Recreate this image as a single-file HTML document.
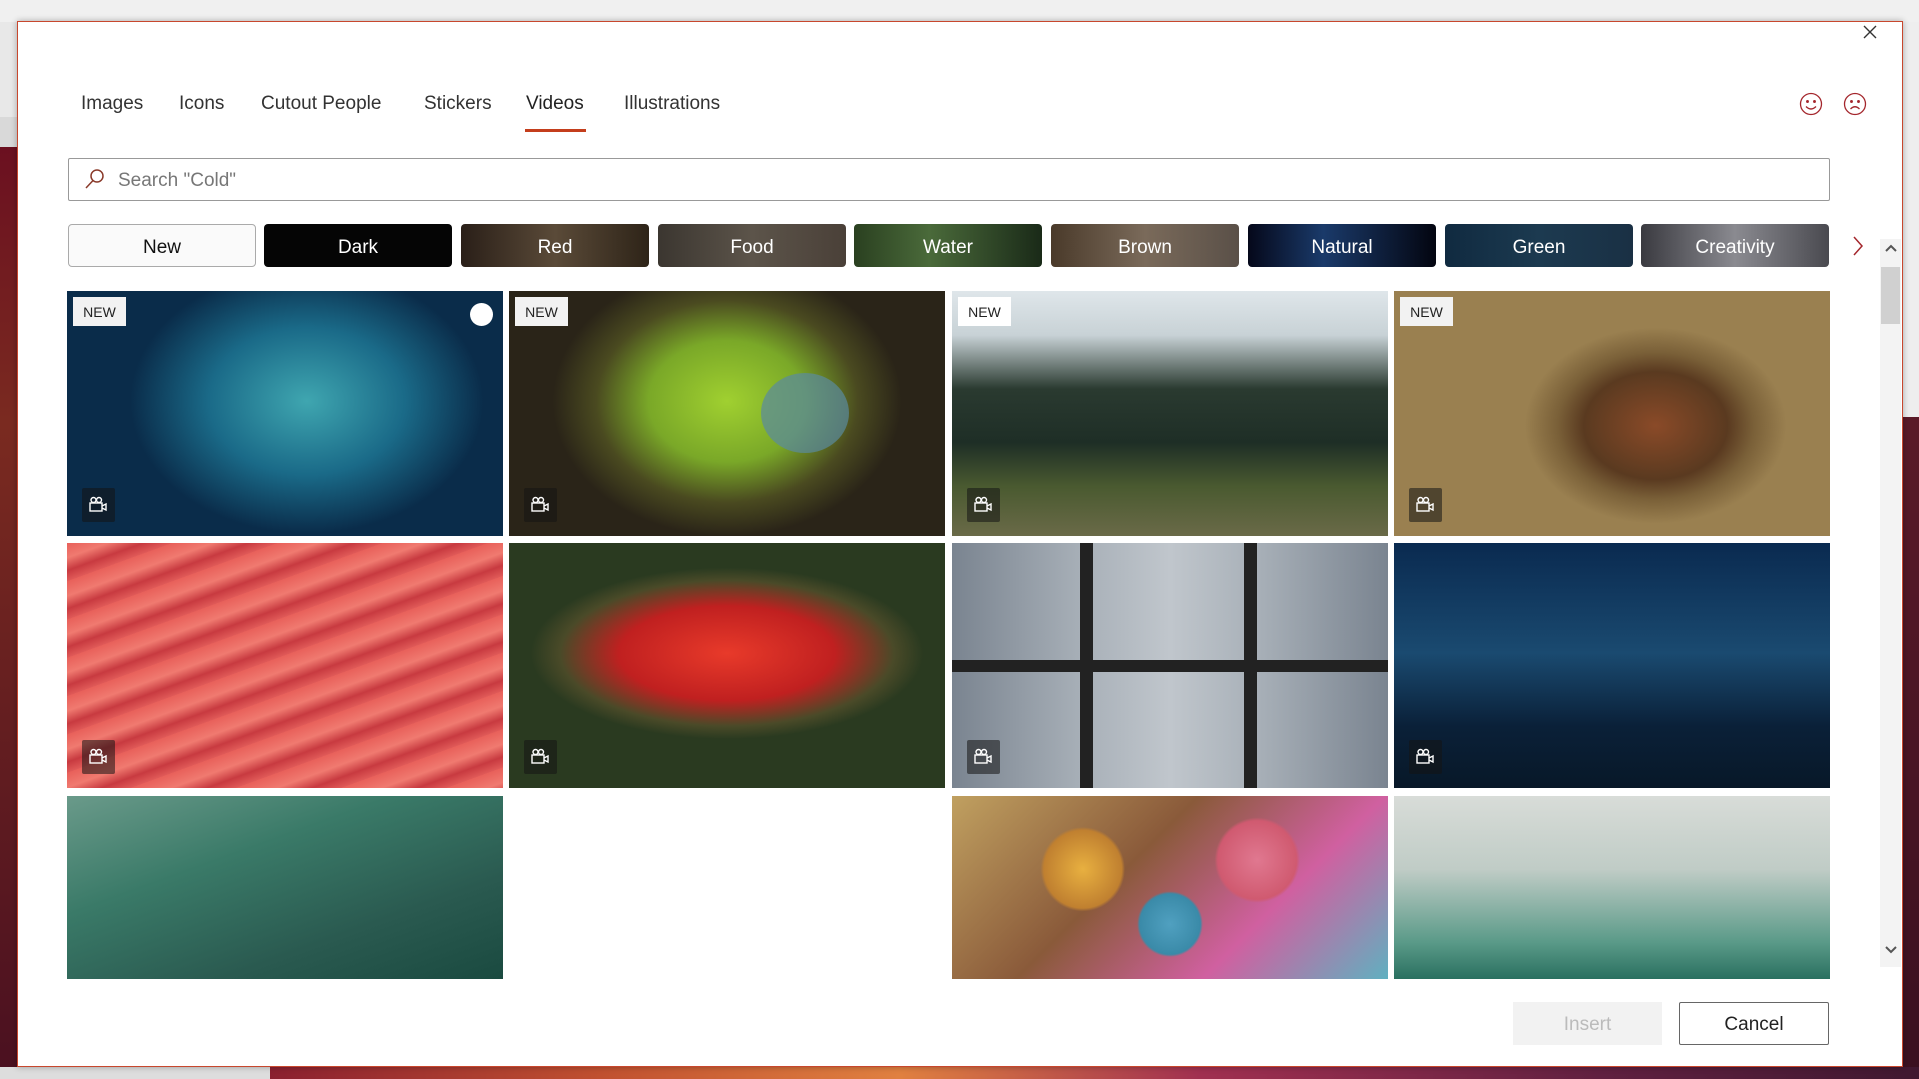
<!DOCTYPE html>
<html><head><meta charset="utf-8"><style>
*{margin:0;padding:0;box-sizing:border-box}
body{width:1919px;height:1079px;overflow:hidden;position:relative;font-family:"Liberation Sans",sans-serif;background:#5a1420}
.abs{position:absolute}
#topbar{left:0;top:0;width:1919px;height:22px;background:#f0f0f0}
#leftbg{left:0;top:22px;width:17px;height:1057px;background:linear-gradient(#e8e8e8 0,#e8e8e8 95px,#d9d9d9 95px,#d9d9d9 125px,#6b1020 125px,#7a2a20 400px,#4a1020)}
#bottombg{left:0;top:1067px;width:1919px;height:12px;background:linear-gradient(90deg,#ddd 0,#ddd 270px,#8a2030 270px,#c05030 600px,#e08040 900px,#a03050 1200px,#602040 1600px,#401830)}
#rightbg{left:1903px;top:22px;width:16px;height:1057px;background:linear-gradient(#eee 0,#eee 395px,#5a1a28 395px,#3a1020)}
#dlg{left:17px;top:21px;width:1886px;height:1046px;background:#fff;border:1px solid #c8472d;box-shadow:0 0 6px rgba(0,0,0,.3)}
.tab{position:absolute;top:93px;font-size:19px;color:#333}
.chip{position:absolute;top:224px;width:188px;height:43px;border-radius:4px;color:#fff;font-size:19px;display:flex;align-items:center;justify-content:center;padding-top:4px}
.tile{position:absolute;width:436px;overflow:hidden}
.new{position:absolute;left:6px;top:6px;width:53px;height:29px;background:#f2f2f2;color:#222;font-size:14px;display:flex;align-items:center;justify-content:center}
.vid{position:absolute;left:15px;bottom:14px;width:33px;height:34px;background:rgba(20,20,20,.55);border-radius:2px}
.vid svg{position:absolute;left:7px;top:8px}
</style></head><body>
<div class="abs" id="topbar"></div>
<div class="abs" id="leftbg"></div>
<div class="abs" id="rightbg"></div>
<div class="abs" id="bottombg"></div>
<div class="abs" id="dlg"></div>

<div class="tab" style="left:81px">Images</div>
<div class="tab" style="left:179px">Icons</div>
<div class="tab" style="left:261px">Cutout People</div>
<div class="tab" style="left:424px">Stickers</div>
<div class="tab" style="left:526px;color:#222">Videos</div>
<div class="tab" style="left:624px">Illustrations</div>
<div class="abs" style="left:525px;top:129px;width:61px;height:3px;background:#c43e1c"></div>

<svg class="abs" style="left:1799px;top:92px" width="24" height="24" viewBox="0 0 24 24" fill="none" stroke="#a4262c" stroke-width="1.3"><circle cx="12" cy="12" r="10.5"/><circle cx="8.5" cy="9.5" r=".8" fill="#a4262c"/><circle cx="15.5" cy="9.5" r=".8" fill="#a4262c"/><path d="M7 14.5q5 5 10 0"/></svg>
<svg class="abs" style="left:1843px;top:92px" width="24" height="24" viewBox="0 0 24 24" fill="none" stroke="#a4262c" stroke-width="1.3"><circle cx="12" cy="12" r="10.5"/><circle cx="8.5" cy="9.5" r=".8" fill="#a4262c"/><circle cx="15.5" cy="9.5" r=".8" fill="#a4262c"/><path d="M7.5 17q4.5-4.5 9 0"/></svg>
<svg class="abs" style="left:1862px;top:24px" width="16" height="16" viewBox="0 0 16 16" stroke="#333" stroke-width="1.4"><path d="M2 2L14 14M14 2L2 14"/></svg>

<div class="abs" style="left:68px;top:158px;width:1762px;height:43px;border:1px solid #999;border-radius:2px"></div>
<svg class="abs" style="left:84px;top:168px" width="22" height="22" viewBox="0 0 22 22" fill="none" stroke="#8a3a2a" stroke-width="1.5"><circle cx="13" cy="8" r="6"/><path d="M9 12.5L2 20"/></svg>
<div class="abs" style="left:118px;top:170px;font-size:19px;color:#777">Search "Cold"</div>

<div class="chip" style="left:68px;background:#fafafa;border:1px solid #aaa;color:#111">New</div>
<div class="chip" style="left:264px;background:#050505">Dark</div>
<div class="chip" style="left:461px;background:linear-gradient(90deg,#2a1f18,#5a4a38 50%,#2e2418)">Red</div>
<div class="chip" style="left:658px;background:linear-gradient(90deg,#3b3630,#5c544a,#4a4038)">Food</div>
<div class="chip" style="left:854px;background:linear-gradient(90deg,#2a4020,#4a6a3a 40%,#1a2a18)">Water</div>
<div class="chip" style="left:1051px;background:linear-gradient(90deg,#4a3a2a,#7a6a5a 50%,#5a5048)">Brown</div>
<div class="chip" style="left:1248px;background:linear-gradient(90deg,#05081a,#1a3a6a 40%,#030510)">Natural</div>
<div class="chip" style="left:1445px;background:linear-gradient(90deg,#102a40,#1c3a50 50%,#1a3044)">Green</div>
<div class="chip" style="left:1641px;background:linear-gradient(90deg,#3a3a40,#8a8a90 50%,#4a4a50)">Creativity</div>
<svg class="abs" style="left:1851px;top:235px" width="14" height="22" viewBox="0 0 14 22" fill="none" stroke="#a4262c" stroke-width="1.5"><path d="M3 2L11 11L3 20"/></svg>

<div class="abs" style="left:1880px;top:239px;width:21px;height:728px;background:#f3f3f3"></div>
<div class="abs" style="left:1881px;top:267px;width:19px;height:57px;background:#d0d0d0"></div>
<svg class="abs" style="left:1884px;top:242px" width="14" height="12" viewBox="0 0 14 12" fill="none" stroke="#555" stroke-width="2"><path d="M2 9L7 4L12 9"/></svg>
<svg class="abs" style="left:1884px;top:944px" width="14" height="12" viewBox="0 0 14 12" fill="none" stroke="#555" stroke-width="2"><path d="M2 3L7 8L12 3"/></svg>

<!-- row1 -->
<div class="tile" style="left:67px;top:291px;height:245px;background:radial-gradient(ellipse 45% 60% at 55% 45%,#3fa6b0,#1a6a88 50%,#0a2c4a 90%)"><div class="new">NEW</div><div class="abs" style="left:403px;top:12px;width:23px;height:23px;border-radius:50%;background:#fff"></div><div class="vid"><svg width="19" height="17" viewBox="0 0 19 17" fill="none" stroke="#fff" stroke-width="1.4"><circle cx="4.5" cy="4" r="2.5"/><circle cx="10" cy="4" r="2.5"/><rect x="1" y="7" width="12" height="8"/><path d="M13 10L17 8V14L13 12"/></svg></div></div>
<div class="tile" style="left:509px;top:291px;height:245px;background:radial-gradient(ellipse 40% 55% at 50% 45%,#a0d030,#7aa828 45%,#4a4a20 75%,#2a2418)"><div class="new">NEW</div><div class="abs" style="left:252px;top:82px;width:88px;height:80px;border-radius:50%;background:#5a8aa0;opacity:.7"></div><div class="vid"><svg width="19" height="17" viewBox="0 0 19 17" fill="none" stroke="#fff" stroke-width="1.4"><circle cx="4.5" cy="4" r="2.5"/><circle cx="10" cy="4" r="2.5"/><rect x="1" y="7" width="12" height="8"/><path d="M13 10L17 8V14L13 12"/></svg></div></div>
<div class="tile" style="left:952px;top:291px;height:245px;background:linear-gradient(#dfe6ea 0,#c8d2d6 18%,#2a3a30 40%,#1e2e26 62%,#4a5a30 80%,#6a6a48)"><div class="new" style="background:#fff">NEW</div><div class="vid"><svg width="19" height="17" viewBox="0 0 19 17" fill="none" stroke="#fff" stroke-width="1.4"><circle cx="4.5" cy="4" r="2.5"/><circle cx="10" cy="4" r="2.5"/><rect x="1" y="7" width="12" height="8"/><path d="M13 10L17 8V14L13 12"/></svg></div></div>
<div class="tile" style="left:1394px;top:291px;height:245px;background:radial-gradient(ellipse 30% 40% at 60% 55%,#8a4a28,#5a3a20 55%,#7a6038 75%,#9a8050)"><div class="new">NEW</div><div class="vid"><svg width="19" height="17" viewBox="0 0 19 17" fill="none" stroke="#fff" stroke-width="1.4"><circle cx="4.5" cy="4" r="2.5"/><circle cx="10" cy="4" r="2.5"/><rect x="1" y="7" width="12" height="8"/><path d="M13 10L17 8V14L13 12"/></svg></div></div>
<!-- row2 -->
<div class="tile" style="left:67px;top:543px;height:245px;background:repeating-linear-gradient(160deg,#e8605a 0,#f07a70 14px,#c83a40 26px,#e05a58 36px)"><div class="vid"><svg width="19" height="17" viewBox="0 0 19 17" fill="none" stroke="#fff" stroke-width="1.4"><circle cx="4.5" cy="4" r="2.5"/><circle cx="10" cy="4" r="2.5"/><rect x="1" y="7" width="12" height="8"/><path d="M13 10L17 8V14L13 12"/></svg></div></div>
<div class="tile" style="left:509px;top:543px;height:245px;background:radial-gradient(ellipse 45% 35% at 50% 45%,#e83a2a,#c02020 55%,#4a4a28 85%,#2a3a20)"><div class="vid"><svg width="19" height="17" viewBox="0 0 19 17" fill="none" stroke="#fff" stroke-width="1.4"><circle cx="4.5" cy="4" r="2.5"/><circle cx="10" cy="4" r="2.5"/><rect x="1" y="7" width="12" height="8"/><path d="M13 10L17 8V14L13 12"/></svg></div></div>
<div class="tile" style="left:952px;top:543px;height:245px;background:linear-gradient(90deg,#7a8490,#a8b0b8 30%,#c0c6cc 50%,#a8b0b8 70%,#7a8490)"><div class="abs" style="left:128px;top:0;width:13px;height:245px;background:#222"></div><div class="abs" style="left:292px;top:0;width:13px;height:245px;background:#222"></div><div class="abs" style="left:0;top:117px;width:436px;height:12px;background:#222"></div><div class="vid"><svg width="19" height="17" viewBox="0 0 19 17" fill="none" stroke="#fff" stroke-width="1.4"><circle cx="4.5" cy="4" r="2.5"/><circle cx="10" cy="4" r="2.5"/><rect x="1" y="7" width="12" height="8"/><path d="M13 10L17 8V14L13 12"/></svg></div></div>
<div class="tile" style="left:1394px;top:543px;height:245px;background:linear-gradient(#0a2a50,#1a4a70 45%,#0a2038 75%,#081828)"><div class="vid"><svg width="19" height="17" viewBox="0 0 19 17" fill="none" stroke="#fff" stroke-width="1.4"><circle cx="4.5" cy="4" r="2.5"/><circle cx="10" cy="4" r="2.5"/><rect x="1" y="7" width="12" height="8"/><path d="M13 10L17 8V14L13 12"/></svg></div></div>
<!-- row3 -->
<div class="tile" style="left:67px;top:796px;height:183px;background:linear-gradient(160deg,#6a9a8a,#3a7a68 35%,#2a5a50 70%,#1a4a40)"></div>
<div class="tile" style="left:952px;top:796px;height:183px;background:radial-gradient(circle at 30% 40%,#e8b040 0,#c08030 12%,transparent 13%),radial-gradient(circle at 70% 35%,#e07890 0,#d05a70 12%,transparent 13%),radial-gradient(circle at 50% 70%,#50a0c0 0,#3a8aa8 12%,transparent 13%),linear-gradient(135deg,#c0a060,#8a5a3a 40%,#d060a0 70%,#60b0c0)"></div>
<div class="tile" style="left:1394px;top:796px;height:183px;background:linear-gradient(#d8dcd8,#c0ccc6 40%,#5a9a88 80%,#2a7060)"></div>

<div class="abs" style="left:1513px;top:1002px;width:149px;height:43px;background:#f2f2f2;color:#bbb;font-size:19px;display:flex;align-items:center;justify-content:center;padding-top:2px">Insert</div>
<div class="abs" style="left:1679px;top:1002px;width:150px;height:43px;border:1px solid #666;border-radius:2px;color:#222;font-size:19px;display:flex;align-items:center;justify-content:center;padding-top:2px">Cancel</div>
</body></html>
